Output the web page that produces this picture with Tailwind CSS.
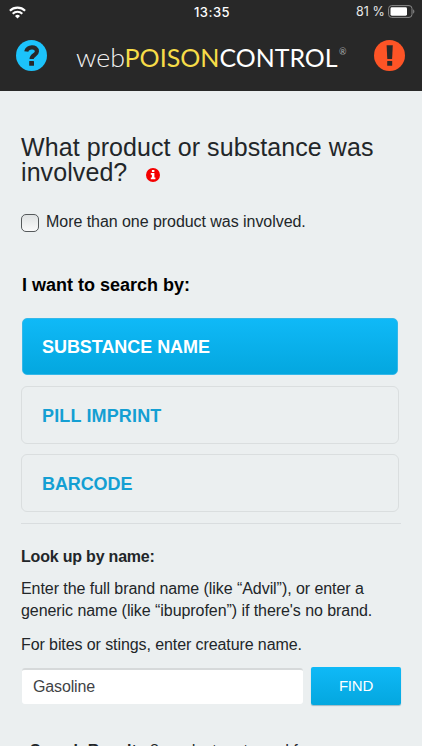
<!DOCTYPE html>
<html lang="en">
<head>
<meta charset="utf-8">
<meta name="viewport" content="width=device-width, initial-scale=1">
<title>webPOISONCONTROL</title>
<script src="https://cdn.jsdelivr.net/npm/@tailwindcss/browser@4"></script>
</head>
<body class="h-[750px] overflow-hidden bg-white font-['Liberation_Sans',Arial,sans-serif] text-[#222629]">
<div class="flex h-[746px] flex-col overflow-hidden bg-[#ebeff0]">
  <header class="h-[91px] shrink-0 bg-[#282828] text-white">
    <div class="grid h-6 grid-cols-3 items-center pl-[9px] pr-[7px]">
      <svg class="h-[13px] w-[17px]" viewBox="0 0 17 13" fill="none" stroke="#fff" stroke-width="2.1"><path d="M.9 4.8a10.8 10.8 0 0 1 15.2 0M3.7 7.7a6.8 6.8 0 0 1 9.6 0"/><path d="M8.5 12.4 6 9.9a3.6 3.6 0 0 1 5 0z" fill="#fff" stroke="none"/></svg>
      <span class="text-center font-[Inter,sans-serif] text-[13px] font-medium leading-4 tracking-[0.5px]">13:35</span>
      <div class="flex items-center justify-end gap-[3px]">
        <span class="whitespace-nowrap font-[Inter,sans-serif] text-[12.5px] leading-4 tracking-[0.1px] text-[#e8e8e8]">81 %</span>
        <svg class="-mt-px h-[13px] w-[27px]" viewBox="0 0 27 13"><rect x=".6" y=".6" width="23.4" height="11.8" rx="3" fill="none" stroke="#8a8a8a"/><rect x="2.5" y="2.3" width="16.5" height="8.4" rx="1.4" fill="#fff"/><path d="M25.2 4.300c1.600.7 1.600 3.700 0 4.400z" fill="#8a8a8a"/></svg>
      </div>
    </div>
    <div class="flex h-[62px] items-center justify-between pl-4 pr-[17px]">
      <svg class="h-[31px] w-[31px]" viewBox="0 0 31 31"><circle cx="15.5" cy="15.5" r="15.5" fill="#1cc3fb"/><path d="M10.3 11.5C11 6.300 20.900 5.600 20.900 11.500c0 3.700-5.300 3.400-5.300 7.600" fill="none" stroke="#282828" stroke-width="4.2"/><rect x="13.2" y="21" width="4.8" height="4.8" rx=".5" fill="#282828"/></svg>
      <svg class="h-[40px] w-[276px] shrink-0" viewBox="0 0 276 40"><g font-family="Lato, sans-serif" font-size="25.5" font-weight="400"><text x="3" y="31.5" textLength="49" lengthAdjust="spacingAndGlyphs" fill="#f2f2f2" font-weight="300">web</text><text x="51.5" y="31.5" textLength="95" lengthAdjust="spacingAndGlyphs" fill="#f6dc48">POISON</text><text x="146.5" y="31.5" textLength="118" lengthAdjust="spacingAndGlyphs" fill="#fff">CONTROL</text></g><text x="266" y="20" font-family="Lato, sans-serif" font-size="9" fill="#aaa">®</text></svg>
      <svg class="h-[31px] w-[31px]" viewBox="0 0 31 31"><circle cx="15.5" cy="15.5" r="15.5" fill="#fd5426"/><path d="M12.6 5.3h6.2l-.7 13.7h-4.8z" fill="#282828"/><rect x="13.2" y="21" width="5" height="4.8" rx=".5" fill="#282828"/></svg>
    </div>
  </header>
  <main class="px-[21px]">
    <h1 class="mt-[44px] h-[50px] whitespace-nowrap text-[25px] leading-[25px] tracking-[0.08px]">What product or substance was<br>involved?<svg class="ml-[19px] inline-block h-[14px] w-[14px] align-[-1px]" viewBox="0 0 14 14"><circle cx="7" cy="7" r="7" fill="#f40000"/><path d="M5.9 2h2.5v2H5.9zM4.8 5h3.6v4.5h1v1.8H4.8V9.5h1.1V6.8H4.8z" fill="#fff"/></svg></h1>
    <label class="mt-[26px] flex h-[22px] items-center"><span class="relative top-px h-[18px] w-[18px] rounded-[5px] border border-[#55595b] bg-linear-to-b from-[#dfe2e3] to-[#fafafa]"></span><span class="ml-[7px] text-[16px] leading-[22px] tracking-[-0.05px]">More than one product was involved.</span></label>
    <h2 class="ml-px mt-[40px] text-[18px] font-bold leading-[24px] text-black">I want to search by:</h2>
    <div class="mt-[21px] flex flex-col gap-[10px] text-[18px] font-bold">
      <button class="ml-px mb-px flex h-[57px] w-[376px] items-center rounded-[5px] border border-[#35b8e9] bg-linear-to-b from-[#0fb9f7] to-[#04a7df] pl-[19px] pt-[2px] text-left tracking-[-0.05px] text-white">SUBSTANCE NAME</button>
      <button class="flex h-[58px] w-[378px] items-center rounded-[6px] border border-[#dadedf] pl-[20px] pt-[2px] text-left tracking-[0.15px] text-[#149fd3]">PILL IMPRINT</button>
      <button class="flex h-[58px] w-[378px] items-center rounded-[6px] border border-[#dadedf] pl-[20px] pt-[2px] text-left tracking-[-0.1px] text-[#149fd3]">BARCODE</button>
    </div>
    <hr class="mt-[11px] border-[#d9dddf]">
    <h3 class="mt-[22px] text-[16px] font-bold leading-[22px] tracking-[-0.2px]">Look up by name:</h3>
    <p class="mt-[10px] whitespace-nowrap text-[16px] leading-[22px] tracking-[-0.06px]">Enter the full brand name (like “Advil”), or enter a<br>generic name (like “ibuprofen”) if there's no brand.</p>
    <p class="mt-[12px] text-[16px] leading-[22px] tracking-[-0.09px]">For bites or stings, enter creature name.</p>
    <div class="mt-[11px] flex items-start">
      <div class="ml-px mt-px flex h-[36px] w-[281px] items-center rounded-[3px] border-t-2 border-[#d6d9da] bg-white pb-px pl-[11px] text-[16px] tracking-[-0.15px] text-[#3f4346]">Gasoline</div>
      <button class="ml-2 h-[38px] w-[90px] rounded-[2px] bg-linear-to-b from-[#0fb9f7] to-[#04a7df] text-[15px] tracking-[-0.2px] text-white shadow-[0_1px_1px_#9dbac5]">FIND</button>
    </div>
    <p class="ml-[9px] mt-[35px] whitespace-nowrap text-[16px] leading-[22px]"><b>Search Results</b> 8 products returned for</p>
  </main>
</div>
</body>
</html>
